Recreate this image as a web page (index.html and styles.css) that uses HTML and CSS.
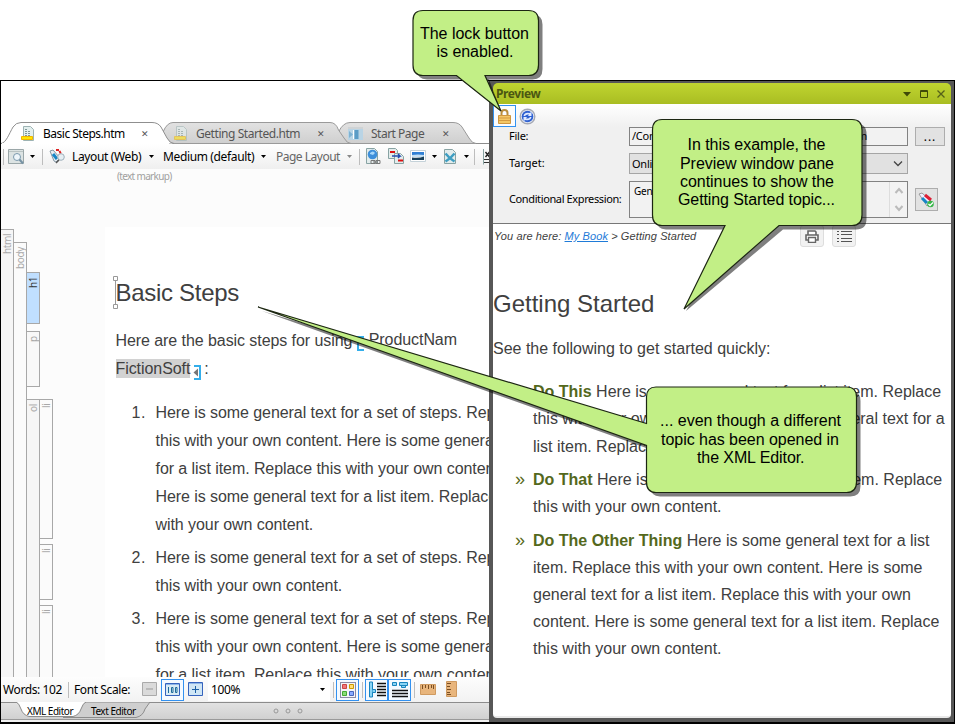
FILE: index.html
```html
<!DOCTYPE html>
<html lang="en">
<head>
<meta charset="utf-8">
<title>XML Editor</title>
<link rel="stylesheet" href="styles.css">
</head>
<body>
<div class="stage">
<div class="app">
  <section class="editor">
    <div class="tabs">
      <svg class="tab-shapes" width="488" height="22" viewBox="0 1 488 22">
        <defs><linearGradient id="tg" x1="0" y1="0" x2="0" y2="1"><stop offset="0" stop-color="#e2e2e2"/><stop offset="1" stop-color="#cfcfcf"/></linearGradient></defs>
        <path d="M0 22.500H488" stroke="#8c8c8c" fill="none"/>
        <path d="M337.500 11Q342 1.500 349 1.500H452Q458 1.500 461 6L468 17Q471 22.500 475 22.500H345Z" fill="url(#tg)" stroke="#9a9a9a"/>
        <path d="M162 11Q166 1.500 172 1.500H329Q335 1.500 337.500 9L343 17Q346 22.500 350 22.500H171Q167 22 162 11Z" fill="url(#tg)" stroke="#9a9a9a"/>
        <path d="M0 22.500C5 22 8 13 12 6Q15 1.500 20 1.500H151Q157 1.500 160 6L166 17Q169 22.500 173 22.500" fill="#fff" stroke="#8f8f8f"/>
        <path d="M1 22.500H168" stroke="#fff"/>
      </svg>
      <div class="tab t1"><svg width="14" height="16"><path d="M2.500.5h7l3 3v11h-10z" fill="#e3efee" stroke="#9db3b3"/><path d="M4 3.500h3M4 5.500h5M4 7.500h6M4 9.500h6" stroke="#7f9797" stroke-dasharray="2 1"/><path d="M.5 10.500h11v3h-11z" fill="#ffe500" stroke="#f0b400"/></svg><span>Basic Steps.htm</span><i>✕</i></div>
      <div class="tab t2"><svg width="14" height="16" opacity=".55"><path d="M2.500.5h7l3 3v11h-10z" fill="#e3efee" stroke="#9db3b3"/><path d="M4 3.500h3M4 5.500h5M4 7.500h6M4 9.500h6" stroke="#7f9797" stroke-dasharray="2 1"/><path d="M.5 10.500h11v3h-11z" fill="#ffe500" stroke="#f0b400"/></svg><span>Getting Started.htm</span><i>✕</i></div>
      <div class="tab t3"><svg width="16" height="14"><path d="M0 2h15v11H0z" fill="#b9d4e5"/><path d="M0 0h15v2H0z" fill="#cfd3d5"/><path d="M1 4l4 3.500L1 11z" fill="#7fb3d3"/><path d="M5.500 3v9" stroke="#fff"/><path d="M6.500 3h4v9h-4z" fill="#5b9cc6"/></svg><span>Start Page</span><i>✕</i></div>
    </div>
    <div class="toolbar">
      <b class="sep"></b>
      <svg class="ic" width="17" height="16"><path d="M.5.5h15v14H.5z" fill="#dce3e3" stroke="#9aa6a8"/><path d="M1 2.500h14" stroke="#b9c3c3"/><circle cx="9" cy="8" r="3.500" fill="#eef6fb" stroke="#7b99ad"/><path d="M11.500 10.500l3.500 4" stroke="#7793a5" stroke-width="2"/></svg>
      <u class="dd a"></u><b class="sep s2"></b>
      <svg class="ic k" width="17" height="15"><path d="M1 2l3-1 7 8-4 4-2-1z" fill="#e8eef3" stroke="#8496a3"/><path d="M4 5l4 5" stroke="#1686c6" stroke-width="3"/><path d="M7 1l3 0 2 4" stroke="#d22" fill="none" stroke-width="2" stroke-dasharray="3 1"/><circle cx="12" cy="8" r="3.300" fill="#e6eef3" stroke="#9fb0bb"/><path d="M10 11l-3 3" stroke="#555" stroke-width="1.500"/></svg>
      <span class="l1">Layout (Web)</span><u class="dd b"></u>
      <span class="l2">Medium (default)</span><u class="dd c"></u>
      <span class="l3">Page Layout</span><u class="dd d"></u><b class="sep s3"></b>
      <svg class="ic e" width="15" height="17"><path d="M.5.5h8l3 3v12H.5z" fill="#e3ecec" stroke="#88a3a3"/><circle cx="6.500" cy="6.500" r="4.800" fill="#3d8fda"/><path d="M4 5q3-3 5 0l-2 2-3-1z" fill="#a5d7fb"/><path d="M5 12.500h4v3H5zm5 0h4v3h-4zM7 14h5" fill="none" stroke="#777"/></svg>
      <svg class="ic f" width="17" height="17"><path d="M.5.5h7l2 2v8h-9z" fill="#e3ecec" stroke="#88a3a3"/><path d="M6.500 5.500h6l3 3v7h-9z" fill="#e3ecec" stroke="#88a3a3"/><path d="M2 4h5" stroke="#d11" stroke-width="2"/><path d="M4 8h8l-2-2M12 8l-2 2" fill="none" stroke="#234bb0" stroke-width="1.500"/><path d="M10 12.500h5" stroke="#d11" stroke-width="2"/></svg>
      <svg class="ic g" width="17" height="13"><path d="M.5.500h15v11H.5z" fill="#fff" stroke="#c5d2d9"/><path d="M2 2h12v4H2z" fill="#2f7fd4"/><path d="M2 5q6-1 12 0v2H2z" fill="#c3e0f4"/><path d="M2 7.500q7 1 12-1V10H2z" fill="#18405a"/></svg><u class="dd h"></u>
      <svg class="ic i" width="13" height="16"><path d="M.5.5h8l3 3v11H.5z" fill="#e3ecec" stroke="#88a3a3"/><path d="M1.500 4.500q4 5 9 8M10.500 4.500q-4 5-9 8" fill="none" stroke="#3e9ec2" stroke-width="2.400"/></svg><u class="dd j"></u><b class="sep s4"></b>
      <svg class="ic x" width="8" height="16"><path d="M.5 0v15.500" stroke="#88a3a3"/><path d="M2.500 3l4 5M6.500 3l-4 5" stroke="#222" stroke-width="1.400"/><path d="M1 10.500h7M1 13.500h7" stroke="#333"/></svg>
    </div>
    <div class="canvas">
      <div class="bars">
        <div class="col c1"><div class="blk">html</div></div>
        <div class="col c2"><div class="blk">body</div></div>
        <div class="col c3"><div class="blk h1b">h1</div><div class="blk pb">p</div><div class="blk olb">ol</div></div>
        <div class="col c4"><div class="blk li1">li</div><div class="blk li2">li</div><div class="blk li3">li</div></div>
      </div>
      <div class="doc">
        <div class="markup">(text markup)</div>
        <div class="paper">
          <h1><svg class="caret" width="5" height="33"><path d="M2.500 5v23M.5.5h4v4h-4zM.5 28.500h4v4h-4z" fill="#fff" stroke="#999"/></svg>Basic Steps</h1>
          <p>Here are the basic steps for using <svg class="vb" width="7" height="15"><path d="M7 1H1v13h6" fill="none" stroke="#34aeea" stroke-width="2"/></svg><span class="var">ProductNam e:</span></p>
          <p><mark>FictionSoft</mark><svg class="ve" width="11" height="15"><path d="M3 1h6v13H3" fill="none" stroke="#34aeea" stroke-width="2"/><path d="M7 3.500v8L2.500 7.500z" fill="#777"/></svg>:</p>
          <ol>
            <li>Here is some general text for a set of steps. Replace<br>this with your own content. Here is some general text<br>for a list item. Replace this with your own content.<br>Here is some general text for a list item. Replace this<br>with your own content.</li>
            <li>Here is some general text for a set of steps. Replace<br>this with your own content.</li>
            <li>Here is some general text for a set of steps. Replace<br>this with your own content. Here is some general text<br>for a list item. Replace this with your own content.</li>
          </ol>
        </div>
      </div>
    </div>
    <div class="status">
      <span class="w1">Words: 102</span><b class="sep"></b><span class="w2">Font Scale:</span>
      <svg width="16" height="15"><path d="M.5.500h14v13H.5z" fill="#dadada" stroke="#aaa"/><path d="M4 7h7" stroke="#999"/></svg>
      <div class="on o1"><svg width="15" height="14"><path d="M.5.500h14v12H.5z" fill="#d8ebf5" stroke="#3563bd"/><path d="M1 1.500h13" stroke="#8db5e8"/><path d="M3.500 4v6M6.500 4.500h1.500v5H6.500zM10.500 4.500H12v5h-1.500z" fill="none" stroke="#1c6b9a"/></svg></div>
      <svg class="plus" width="16" height="15"><path d="M.5.500h14v13H.5z" fill="#cfe6f5" stroke="#3563bd"/><path d="M1 1.500h13" stroke="#8db5e8"/><path d="M4 7.500h7M7.500 4v7" stroke="#1c5fa5"/></svg>
      <div class="zoom"><span>100%</span><u class="dd"></u></div>
      <b class="sep z1"></b>
      <div class="on"><svg width="16" height="16"><rect x=".5" y=".5" width="15" height="15" fill="#f3f4f8" stroke="#8b8ba4"/><path d="M2.500 2.500h4v4h-4z" fill="#e77" stroke="#c44"/><path d="M9.500 2.500h4v4h-4z" fill="#fd7" stroke="#c90"/><path d="M2.500 9.500h4v4h-4z" fill="#8d7" stroke="#4a3"/><path d="M9.500 9.500h4v4h-4z" fill="#8af" stroke="#46b"/></svg></div>
      <b class="sep z2"></b>
      <div class="on"><svg width="18" height="17"><path d="M1.500 1h3v15h-3z" fill="#8ad4f4" stroke="#1783bd"/><path d="M4.500 8.500h3v3h-3" fill="#8ad4f4" stroke="#1783bd"/><path d="M9 2.500h9M9 5.500h9M9 8.500h9M9 11.500h9M9 14.500h9" stroke="#111" stroke-width="1.600"/></svg></div>
      <div class="on o4"><svg width="18" height="17"><path d="M1.500 1.500h4v3h-4zM8.500 1.500h8v3h-8zM10.500 4.500h4v2h-4z" fill="#8ad4f4" stroke="#1783bd"/><path d="M1 9.500h16M1 12.500h16M1 15.500h16" stroke="#111" stroke-width="1.600"/></svg></div>
      <b class="sep z3"></b>
      <svg class="r1" width="17" height="12"><path d="M.5.500h15v10H.5z" fill="#e8b57c" stroke="#cf9a60"/><path d="M2.500 1v4M5.500 1v3M8.500 1v4M11.500 1v3M13.500 1v4" stroke="#7a4e22"/></svg>
      <svg class="r2" width="12" height="17"><path d="M.5.500h10v15H.5z" fill="#e8b57c" stroke="#cf9a60"/><path d="M1 2.500h4M1 5.500h3M1 8.500h4M1 11.500h3M1 13.500h4" stroke="#7a4e22"/></svg>
    </div>
    <div class="views">
      <svg class="view-shapes" width="160" height="16"><path d="M62 15.500H135Q142 14 144 7L149 0H84z" fill="#cfcfcf" stroke="#8c8c8c"/><path d="M15 0Q18 1 20 7T28 14.500H72Q78 13 80 7T85 0" fill="#fff" stroke="#8c8c8c"/></svg>
      <span class="v1">XML Editor</span><span class="v2">Text Editor</span>
      <svg class="dots" width="30" height="6"><g fill="none" stroke="#999"><circle cx="3" cy="3" r="2"/><circle cx="15" cy="3" r="2"/><circle cx="27" cy="3" r="2"/></g></svg>
    </div>
    <div class="foot"></div>
  </section>
  <section class="preview">
    <header><strong>Preview</strong>
      <svg width="44" height="10"><path d="M1 3h8L5 7.500z" fill="#3f4a08"/><path d="M18.500 1.500h7v7h-7zM18 2.500h8" fill="none" stroke="#3f4a08"/><path d="M35.500 1.500l7 7M42.500 1.500l-7 7" stroke="#55611a" stroke-width="1.300"/></svg>
    </header>
    <div class="ptools">
      <div class="lock"><svg width="13" height="15"><path d="M3.500 7V4Q3.500 1 6.500 1T9.500 4v3" fill="none" stroke="#b98d3d" stroke-width="2"/><path d="M.5 6.500h12v8H.5z" fill="#f4c766" stroke="#cf9741"/><path d="M1 9h11M1 11.500h11" stroke="#d59b42"/></svg></div>
      <svg class="ref" width="17" height="17"><circle cx="8.500" cy="8.500" r="7.300" fill="#e8edf8" stroke="#a5a9b4" stroke-width="1.400"/><circle cx="8.500" cy="8.500" r="5.800" fill="#2f61d1"/><path d="M4.500 8q1-4 6-3l2-1v4H9l1-1.500Q7 6 6 8zM12.500 9q-1 4-6 3l-2 1V9H8l-1 1.500q3 .5 4-1.500z" fill="#dfeaff"/></svg>
    </div>
    <div class="form">
      <label class="f1">File:</label><div class="in file"><span>/Content/Topics/</span><span>Getting Started.htm</span></div><div class="btn more">...</div>
      <label class="f2">Target:</label><div class="in sel"><span>Online</span><svg width="10" height="6"><path d="M1 .5l4 4 4-4" fill="none" stroke="#444" stroke-width="1.300"/></svg></div><div></div>
      <label class="f3">Conditional Expression:</label><div class="in cond"><span>General</span><div class="spin"><svg width="10" height="26"><path d="M1.500 6L5 2l3.500 4M1.500 19L5 23l3.500-4" fill="none" stroke="#bbb" stroke-width="2"/></svg></div></div>
      <div class="btn tag"><svg width="17" height="16"><path d="M1 2l3-1 9 8-4 5z" fill="#eef" stroke="#999"/><path d="M4 6l5 5" stroke="#1686c6" stroke-width="3"/><path d="M7 3l6 5" stroke="#dc1e35" stroke-width="3"/><circle cx="12.500" cy="12" r="3.300" fill="#38b54a"/><path d="M10.500 12l1.500 1.500 3-3" fill="none" stroke="#fff" stroke-width="1.300"/></svg></div>
    </div>
    <div class="web">
      <div class="crumbs"><em>You are here: <a>My Book</a> &gt; Getting Started</em>
        <div class="wbtn"><svg width="14" height="13"><path d="M3 5V1h7l1 1v3M1 5h12v5H1z" fill="#fff" stroke="#666" stroke-width="1.600"/><path d="M3.500 7.500h7v5h-7z" fill="#fff" stroke="#666" stroke-width="1.400"/></svg></div>
        <div class="wbtn"><svg width="15" height="13"><path d="M0 1.500h2M0 4.500h2M0 8.500h2M0 11.500h2M4 1.500h11M4 4.500h11M4 8.500h11M4 11.500h11" stroke="#555"/></svg></div>
      </div>
      <h2>Getting Started</h2>
      <p>See the following to get started quickly:</p>
      <ul>
        <li><b>Do This</b> Here is some general text for a list item. Replace<br>this with your own content. Here is some general text for a<br>list item. Replace this with your own content.</li>
        <li><b>Do That</b> Here is some general text for a list item. Replace<br>this with your own content.</li>
        <li><b>Do The Other Thing</b> Here is some general text for a list<br>item. Replace this with your own content. Here is some<br>general text for a list item. Replace this with your own<br>content. Here is some general text for a list item. Replace<br>this with your own content.</li>
      </ul>
    </div>
  </section>
</div>
<svg class="callouts" width="955" height="724" viewBox="0 0 955 724">
  <defs>
    <path id="a" d="M423 10.500H528.500Q538.500 10.500 538.500 20.500V65Q538.500 75.500 528.500 75.500H485L501 111L456.500 75.500H423Q413 75.500 413 65V20.500Q413 10.500 423 10.500Z"/>
    <path id="b" d="M662 119.500H852Q862 119.500 862 130V215Q862 225.500 852 225.500H779L684 309L725 225.500H662Q652.500 225.500 652.500 215V130Q652.500 119.500 662 119.500Z"/>
    <path id="c" d="M656 387H846.500Q856.500 387 856.500 397V482Q856.500 492.500 846.500 492.500H656Q646.500 492.500 646.500 482V445.500L258 307L646.500 423.500V397Q646.500 387 656 387Z"/>
  </defs>
  <g fill="#000" fill-opacity=".5">
    <path d="M427 14.500H532.500Q542.500 14.500 542.500 24.500V69Q542.500 79.500 532.500 79.500H489L501 111L460.500 79.500H427Q417 79.500 417 69V24.500Q417 14.500 427 14.500Z"/>
    <path d="M666 123.500H856Q866.500 123.500 866.500 134V219Q866.500 229.500 856 229.500H783L686 311L729 229.500H666Q656.500 229.500 656.500 219V134Q656.500 123.500 666 123.500Z"/>
    <path d="M660 391H850.500Q860.500 391 860.500 401V486Q860.500 496.500 850.500 496.500H660Q650.500 496.500 650.500 486V449.500L262 311L650.500 427.500V401Q650.500 391 660 391Z"/>
  </g>
  <g fill="#c2ef86" stroke="#1c2612" stroke-width="1.200"><use href="#a"/><use href="#b"/><use href="#c"/></g>
  <g class="ctext">
    <text x="420" y="39" textLength="109">The lock button</text><text x="436.500" y="57" textLength="77">is enabled.</text>
    <text x="687.500" y="150" textLength="138">In this example, the</text><text x="680" y="169" textLength="154">Preview window pane</text><text x="680" y="187" textLength="154">continues to show the</text><text x="678" y="205" textLength="157">Getting Started topic...</text>
    <text x="660" y="426" textLength="181">... even though a different</text><text x="661" y="445" textLength="178">topic has been opened in</text><text x="697" y="463" textLength="107.500">the XML Editor.</text>
  </g>
</svg>
</div>
</body>
</html>
```
FILE: styles.css
```css
* { box-sizing: border-box; }
body { margin: 0; background: #fff; font: 12px/16px "Noto Sans", "Open Sans", sans-serif; color: #1a1a1a; }
svg { display: block; flex: none; }
i, u { font-style: normal; text-decoration: none; }
.stage { position: relative; width: 955px; height: 724px; padding-top: 80px; overflow: hidden; }
.app { display: flex; height: 644px; border: 1px solid #000; border-bottom-width: 2px; }
.callouts { position: absolute; left: 0; top: 0; }
.ctext { font: 16px "Liberation Sans", Arial, sans-serif; fill: #000; }

/* editor pane */
.editor { width: 488px; flex: none; display: flex; flex-direction: column; overflow: hidden; }
.tabs { position: relative; height: 63px; padding-top: 41px; display: flex; flex: none; }
.tab-shapes { position: absolute; left: 0; top: 41px; }
.tab { position: relative; display: flex; align-items: center; height: 23px; white-space: nowrap; letter-spacing: -.5px; }
.tab i { margin-left: auto; width: 8px; font: 9px/16px "DejaVu Sans", sans-serif; color: #555; }
.t1 { width: 128px; margin-left: 20px; }
.t1 span { margin-left: 8px; color: #000; }
.t2 { width: 151px; margin-left: 25px; color: #555; letter-spacing: -.44px; }
.t2 span { margin-left: 8px; }
.t3 { width: 102px; margin-left: 23px; color: #555; }
.t3 span { margin-left: 7px; }
.toolbar { height: 25px; flex: none; display: flex; align-items: center; background: linear-gradient(#fff, #efefef); white-space: nowrap; letter-spacing: -.36px; color: #000; overflow: hidden; }
.toolbar > * { flex: none; }
.sep { width: 1px; height: 16px; background: #bdbdbd; flex: none; margin-left: 2px; }
.ic { margin-left: 4px; }
.dd { width: 5px; height: 3px; background: currentColor; clip-path: polygon(0 0, 100% 0, 50% 100%); flex: none; }
.dd.a { margin-left: 5px; }
.s2 { margin-left: 7px; }
.k { margin-left: 6px; }
.l1 { width: 71px; margin-left: 6px; }
.dd.b { margin-left: 6px; }
.l2 { width: 93px; margin-left: 9px; }
.dd.c { margin-left: 5px; }
.l3 { width: 66px; margin-left: 10px; color: #666; letter-spacing: -.5px; }
.dd.d { margin-left: 5px; color: #888; }
.s3 { margin-left: 7px; }
.e { margin-left: 6px; }
.f { margin-left: 7px; }
.g { margin-left: 5px; }
.dd.h { margin-left: 5px; }
.i { margin-left: 7px; }
.dd.j { margin-left: 7px; }
.s4 { margin-left: 5px; }
.x { margin-left: 8px; }
.canvas { height: 508px; flex: none; display: flex; background: #fcfcfc; overflow: hidden; }
.bars { width: 104px; flex: none; display: flex; font: 10px/12px "Noto Sans", sans-serif; color: #a8a8a8; }
.col { width: 14px; margin-right: -1px; display: flex; flex-direction: column; }
.blk { border: 1px solid #a8a8a8; writing-mode: vertical-rl; transform: rotate(180deg); text-align: right; padding-bottom: 4px; line-height: 12px; letter-spacing: -.4px; background: #fbfbfb; }
.c1 { padding-top: 60px; margin-left: -1px; }
.c2 { padding-top: 73px; }
.c3 { padding-top: 103px; }
.c4 { padding-top: 230px; }
.c1 .blk, .c2 .blk, .olb { flex: 1; border-top: 0; }
.c1 .blk, .olb { background: #f6f6f6; }
.h1b { height: 52px; background: #c0dfff; color: #333; }
.pb { height: 56px; margin-top: 7px; background: #f8f8f8; }
.olb { margin-top: 12px; }
.li1 { height: 140px; }
.li2 { height: 56px; margin-top: 5px; }
.li3 { flex: 1; margin-top: 5px; border-top: 0; }
.doc { flex: 1; min-width: 0; }
.markup { height: 58px; padding-left: 12px; font-size: 10px; line-height: 14px; letter-spacing: -.68px; color: #a0a0a0; white-space: nowrap; }
.paper { background: #fff; height: 450px; padding: 51px 0 0 10.5px; font: 16px/28px "Liberation Sans", Arial, sans-serif; letter-spacing: -.07px; color: #404040; white-space: nowrap; overflow: hidden; }
.paper h1 { position: relative; margin: 0 0 20px; font-size: 24px; line-height: 29px; font-weight: 400; letter-spacing: -.3px; }
.caret { position: absolute; left: -2.5px; top: -2px; }
.paper p { margin: 0; height: 28px; display: flex; white-space: pre; }
.vb { margin: 9px 0 0 0; }
.var { width: 92px; height: 31px; margin: -1px 0 0 5px; overflow: hidden; white-space: normal; line-height: 28px; }
.paper mark { height: 19px; margin-top: 4px; line-height: 20px; background: #d2d2d2; color: #404040; }
.ve { margin: 10px 2px 0 1px; }
.paper ol { margin: 16px 0 0; padding: 0 0 0 40px; list-style: none; counter-reset: step; }
.paper ol li { position: relative; margin-bottom: 5px; counter-increment: step; }
.paper ol li::before { content: counter(step) "."; position: absolute; left: -24px; letter-spacing: .5px; }

.status { height: 25px; flex: none; display: flex; align-items: center; background: linear-gradient(#fdfdfd, #f2f2f2); letter-spacing: -.4px; white-space: nowrap; color: #000; }
.w1 { width: 60px; margin-left: 2px; }
.status .sep { margin-left: 5px; }
.w2 { width: 62px; margin-left: 5px; }
.status > svg { margin-left: 6px; }
.status .w2 + svg { margin-left: 6px; }
.on { width: 23px; height: 22px; border: 1px solid #3291f0; display: flex; align-items: center; justify-content: center; background: #f5faff; flex: none; }
.o1 { margin-left: 3px; }
.status > .plus { margin-left: 4px; }
.zoom { width: 122px; height: 23px; margin-left: 4px; padding: 0 5px 0 3px; display: flex; align-items: center; justify-content: space-between; background: #fff; }
.status .z1 { margin-left: 3px; }
.z1 + .on { margin-left: 2px; }
.status .z2 { margin-left: 3px; }
.z2 + .on { margin-left: 2px; }
.o4 { margin-left: 0; }
.status .z3 { margin-left: 3px; }
.status > .r1 { margin-left: 5px; }
.status > .r2 { margin-left: 9px; }
.views { position: relative; height: 18px; flex: none; display: flex; border-top: 1px solid #8c8c8c; border-bottom: 1px solid #999; background: linear-gradient(#e2e2e2, #d0d0d0); font-size: 10px; line-height: 16px; letter-spacing: -.48px; white-space: nowrap; color: #000; }
.view-shapes { position: absolute; left: 0; top: -1px; }
.v1, .v2 { position: relative; width: 46px; margin-left: 26px; }
.v2 { margin-left: 18px; }
.dots { margin: 5px 0 0 136px; }
.foot { flex: 1; background: #f0f0f0; }

/* preview pane */
.preview { flex: 1; min-width: 0; display: flex; flex-direction: column; background: #575757; padding: 2px 3px 4px 4px; }
.preview header { height: 21px; flex: none; display: flex; align-items: center; justify-content: space-between; padding: 0 5px 0 3px; background: linear-gradient(#c0d530, #a9bd22); border-radius: 5px 5px 0 0; color: #4b5712; }
.preview strong { font-size: 12px; letter-spacing: -.4px; }
.ptools { height: 23px; flex: none; display: flex; background: linear-gradient(#fff, #f0f0f0); }
.lock { width: 23px; height: 22px; margin-top: 1px; border: 1px solid #3291f0; background: #fbfcfe; display: flex; align-items: center; justify-content: center; }
.ref { margin: 4px 0 0 3px; }
.form { height: 97px; flex: none; display: grid; grid-template-columns: 113px 279px 30px; grid-template-rows: 19px 21px 37px; row-gap: 7px; column-gap: 7px; padding: 0 0 0 16px; background: #f0f0f0; border-bottom: 1px solid #777; font-size: 11px; letter-spacing: -.25px; color: #000; }
.form label { white-space: nowrap; align-self: center; margin-top: -2px; }
.f2 { letter-spacing: 0; }
.f3 { letter-spacing: -.38px; }
.in { border: 1px solid #828282; display: flex; justify-content: space-between; padding: 0 2px; overflow: hidden; white-space: nowrap; background: #f2f2f2; }
.file { padding-right: 40px; line-height: 16px; }
.sel { align-items: center; background: #e1e1e1; border-color: #a5a5a5; padding-right: 4px; }
.cond { padding: 0 0 0 4px; line-height: 18px; font-size: 10px; }
.spin { width: 18px; display: flex; align-items: center; justify-content: center; border-left: 1px solid #ddd; background: #f3f3f3; }
.btn { border: 1px solid #adadad; background: #e2e2e2; display: flex; align-items: center; justify-content: center; }
.more { letter-spacing: 1px; font-size: 12px; }
.tag { width: 23px; height: 23px; align-self: center; }
.web { flex: 1; background: #fff; border-radius: 0 0 4px 4px; border-bottom: 2px solid #e9e9e9; font: 16px/27.2px "Liberation Sans", Arial, sans-serif; color: #404040; white-space: nowrap; overflow: hidden; }
.crumbs { height: 24px; display: flex; font-size: 11px; line-height: 25px; }
.crumbs em { width: 307px; padding-left: 1px; letter-spacing: .1px; }
.crumbs a { color: #1f7bd8; text-decoration: underline; }
.wbtn { width: 24px; height: 22px; margin-right: 8px; margin-top: 1px; border: 1px solid #ddd; border-radius: 3px; background: #f2f2f2; display: flex; align-items: center; justify-content: center; }
.web h2 { margin: 41px 0 0; font-size: 24px; line-height: 30px; font-weight: 400; }
.web p { margin: 16px 0 0; }
.web ul { margin: 16px 0 0; padding: 0 0 0 40px; list-style: none; }
.web li { position: relative; margin-bottom: 6.200px; }
.web li::before { content: "»"; position: absolute; left: -18px; color: #5a6b1a; font-size: 18px; letter-spacing: 0; }
.web b { color: #54681c; }
```
